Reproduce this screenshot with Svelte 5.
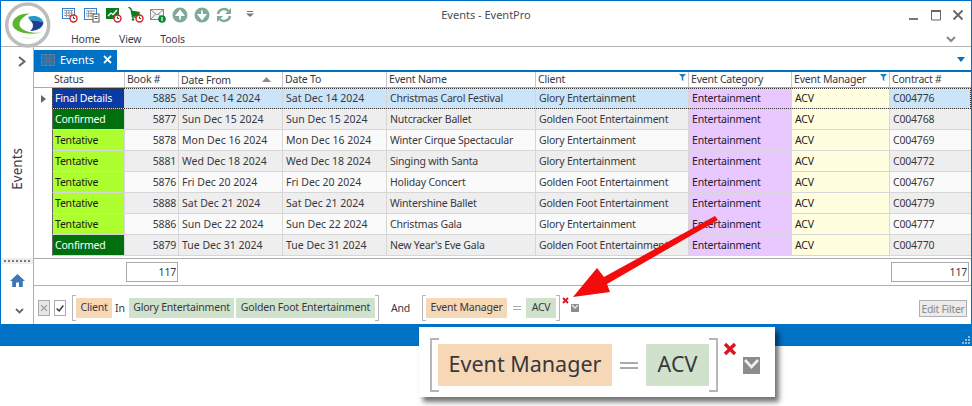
<script>
  const rows = [
    { s: 'Final Details', c: 'final', b: 5885, f: 'Sat Dec 14 2024', t: 'Sat Dec 14 2024', n: 'Christmas Carol Festival', cl: 'Glory Entertainment', k: 'C004776', z: 'sel' },
    { s: 'Confirmed', c: 'conf', b: 5877, f: 'Sun Dec 15 2024', t: 'Sun Dec 15 2024', n: 'Nutcracker Ballet', cl: 'Golden Foot Entertainment', k: 'C004768', z: 'even' },
    { s: 'Tentative', c: 'tent', b: 5878, f: 'Mon Dec 16 2024', t: 'Mon Dec 16 2024', n: 'Winter Cirque Spectacular', cl: 'Glory Entertainment', k: 'C004769', z: 'odd' },
    { s: 'Tentative', c: 'tent', b: 5881, f: 'Wed Dec 18 2024', t: 'Wed Dec 18 2024', n: 'Singing with Santa', cl: 'Glory Entertainment', k: 'C004772', z: 'even' },
    { s: 'Tentative', c: 'tent', b: 5876, f: 'Fri Dec 20 2024', t: 'Fri Dec 20 2024', n: 'Holiday Concert', cl: 'Golden Foot Entertainment', k: 'C004767', z: 'odd' },
    { s: 'Tentative', c: 'tent', b: 5888, f: 'Sat Dec 21 2024', t: 'Sat Dec 21 2024', n: 'Wintershine Ballet', cl: 'Golden Foot Entertainment', k: 'C004779', z: 'even' },
    { s: 'Tentative', c: 'tent', b: 5886, f: 'Sun Dec 22 2024', t: 'Sun Dec 22 2024', n: 'Christmas Gala', cl: 'Glory Entertainment', k: 'C004777', z: 'odd' },
    { s: 'Confirmed', c: 'conf', b: 5879, f: 'Tue Dec 31 2024', t: 'Tue Dec 31 2024', n: "New Year's Eve Gala", cl: 'Golden Foot Entertainment', k: 'C004770', z: 'even' }
  ];
</script>

<div class="page">
  <div class="window">
    <header class="ribbon">
      <svg class="logo" width="54" height="48" viewBox="0 0 54 48">
        <circle cx="26.700" cy="25" r="21" fill="#fff" stroke="#bdbdbd" stroke-width="3.500" />
        <g transform="translate(0,-2)">
          <path d="M29 15.500C19 15 11 20 11.500 26.500C12 33 24 38 42 34.500C30 36 18.500 32 18.500 26.500C18.500 21.500 24 17.500 29 15.500Z" fill="#5cb531" />
          <path d="M27 19C34 16.500 41 19 42.500 24.500C37 22.500 32 22 29 22.500Z" fill="#1f9bc9" />
          <path d="M29 33C37 33 42 29 42.500 24.500C37 22.500 32 22 29 22.500C33 25 33 30 29 33Z" fill="#1c3f94" />
          <path d="M19 38C25 42 32 41 36 39C30 40 24 40 19 38Z" fill="#d5e8c4" />
        </g>
      </svg>
      <div class="ribbon-main">
        <div class="quick">
          <div class="tools">
            <svg width="16" height="16" viewBox="0 0 16 16"><rect x=".5" y="1.500" width="12" height="10" fill="#fff" stroke="#2f80d8"/><path d="M2 3.500h9M2 6h9M2 8.500h9M4.500 3v7M7 3v7M9.500 3v7" stroke="#9a9a9a"/><circle cx="11.500" cy="11.500" r="3.500" fill="#fff" stroke="#d8212c" stroke-width="1.400"/><path d="M11.500 9.500v2h1.500" stroke="#444" fill="none"/></svg>
            <svg width="16" height="16" viewBox="0 0 16 16"><rect x=".5" y="1.500" width="12" height="11" fill="#fff" stroke="#2f80d8"/><path d="M2 4h9M2 6.500h9M2 9h9M4.500 3.500v7M7 3.500v7" stroke="#9a9a9a"/><rect x="9" y="7" width="6" height="8" fill="#fff" stroke="#555"/><path d="M10.500 9.500h3M10.500 11.500h3" stroke="#555"/></svg>
            <svg width="16" height="16" viewBox="0 0 16 16"><rect x="0" y="1" width="13" height="11" fill="#0b7d1f"/><path d="M2 9l3-3 2 1.500L11 3" stroke="#fff" stroke-width="1.300" fill="none"/><circle cx="11.500" cy="11.500" r="3.500" fill="#fff" stroke="#d8212c" stroke-width="1.400"/><path d="M11.500 9.500v2h1.500" stroke="#444" fill="none"/></svg>
            <svg width="16" height="16" viewBox="0 0 16 16"><path d="M.5 0l2.500 2 1.500 8h5" stroke="#0b7d1f" stroke-width="1.400" fill="none"/><path d="M3.500 3.500L12 5l-1 4H4.500z" fill="#0b7d1f"/><circle cx="5" cy="12.500" r="1.300" fill="#0b7d1f"/><circle cx="11.500" cy="11.500" r="3.500" fill="#fff" stroke="#d8212c" stroke-width="1.400"/><path d="M11.500 9.500v2h1.500" stroke="#444" fill="none"/></svg>
            <svg width="16" height="16" viewBox="0 0 16 16"><rect x=".5" y="2.500" width="13" height="10" fill="#f4f4f4" stroke="#8a8a8a"/><path d="M.5 2.500L7 8l6.500-5.500M.5 12.500L5.500 7M13.500 12.500L8.500 7" stroke="#8a8a8a" fill="none"/><circle cx="12" cy="12" r="3.800" fill="#0b8a2b"/><path d="M12 10v4" stroke="#fff" stroke-width="1.200"/></svg>
            <svg width="16" height="16" viewBox="0 0 16 16"><circle cx="8" cy="8" r="7.500" fill="#7eaa97"/><path d="M8 12.500V6M4.800 8L8 4l3.200 4z" stroke="#fff" stroke-width="1.800" fill="#fff"/></svg>
            <svg width="16" height="16" viewBox="0 0 16 16"><circle cx="8" cy="8" r="7.500" fill="#7eaa97"/><path d="M8 3.500V10M4.800 8L8 12l3.200-4z" stroke="#fff" stroke-width="1.800" fill="#fff"/></svg>
            <svg width="16" height="16" viewBox="0 0 16 16"><path d="M2 7a6 5.500 0 0 1 10.500-3M14 9a6 5.500 0 0 1-10.500 3" stroke="#7eaa97" stroke-width="2.400" fill="none"/><path d="M15 1v6h-6zM1 15V9h6z" fill="#7eaa97"/></svg>
            <svg class="more" width="8" height="6" viewBox="0 0 8 6"><path d="M1 .5h6" stroke="#777"/><path d="M0 2.500h8L4 6z" fill="#777"/></svg>
          </div>
          <div class="title">Events - EventPro</div>
          <div class="controls">
            <svg width="12" height="12" viewBox="0 0 12 12"><path d="M1 10h9" stroke="#777" stroke-width="2"/></svg>
            <svg width="12" height="12" viewBox="0 0 12 12"><path d="M1 2.500h10M1.500 2v9h9V2" stroke="#666" fill="none"/><path d="M1 2h10" stroke="#666" stroke-width="2"/></svg>
            <svg width="12" height="12" viewBox="0 0 12 12"><path d="M1.500 1.500l9 9M10.500 1.500l-9 9" stroke="#666" stroke-width="1.800"/></svg>
          </div>
        </div>
        <div class="menu">
          <nav><span>Home</span><span>View</span><span>Tools</span></nav>
          <svg width="10" height="7" viewBox="0 0 10 7"><path d="M1 1l4 4 4-4" stroke="#888" stroke-width="2" fill="none"/></svg>
        </div>
      </div>
    </header>

    <div class="body">
      <aside class="side">
        <svg class="side-open" width="9" height="11" viewBox="0 0 9 11"><path d="M1 1l5.500 4.500L1 10" stroke="#666" stroke-width="2" fill="none"/></svg>
        <div class="side-label"><span>Events</span></div>
        <div class="grip"><i></i><i></i><i></i><i></i><i></i><i></i><i></i></div>
        <svg class="home" width="15" height="13" viewBox="0 0 15 13"><path d="M7.500 0L15 7h-2.200v6H9V8.500H6V13H2.200V7H0z" fill="#3f76b4"/></svg>
        <svg class="side-down" width="9" height="6" viewBox="0 0 9 6"><path d="M1 1l3.500 3.500L8 1" stroke="#666" stroke-width="1.800" fill="none"/></svg>
      </aside>

      <main class="main">
        <div class="tabs">
          <div class="tab">
            <svg width="14" height="12" viewBox="0 0 14 12"><rect x=".5" y=".5" width="13" height="11" fill="#2a6fa8" stroke="#5c7f9e"/><path d="M1 4h12M1 8h12M5 1v10M9 1v10" stroke="#46789f"/><circle cx="7" cy="6" r="1" fill="#c0504d"/></svg>
            <span>Events</span>
            <svg width="9" height="9" viewBox="0 0 9 9"><path d="M1 1l7 7M8 1L1 8" stroke="#fff" stroke-width="1.800"/></svg>
          </div>
          <svg class="tab-menu" width="8" height="5" viewBox="0 0 8 5"><path d="M0 0h8L4 5z" fill="#0072c6"/></svg>
        </div>

        <div class="grid">
          <div class="row head">
            <div class="ind"></div>
            <div class="h">Status</div>
            <div class="h">Book #</div>
            <div class="h split">Date From<svg width="9" height="5" viewBox="0 0 9 5"><path d="M0 5h9L4.500 0z" fill="#8a8a8a"/></svg></div>
            <div class="h">Date To</div>
            <div class="h">Event Name</div>
            <div class="h split filt">Client<svg width="7" height="7" viewBox="0 0 7 7"><path d="M0 0h7L4.300 3v4L2.700 6V3z" fill="#1a7fc4"/></svg></div>
            <div class="h">Event Category</div>
            <div class="h split filt">Event Manager<svg width="7" height="7" viewBox="0 0 7 7"><path d="M0 0h7L4.300 3v4L2.700 6V3z" fill="#1a7fc4"/></svg></div>
            <div class="h">Contract #</div>
          </div>
          {#each rows as r, i}
            <div class="row data {r.z}">
              <div class="ind">{#if i === 0}<svg width="5" height="8" viewBox="0 0 5 8"><path d="M0 0l5 4-5 4z" fill="#666"/></svg>{/if}</div>
              <div class="c st {r.c}">{r.s}</div>
              <div class="c num">{r.b}</div>
              <div class="c date">{r.f}</div>
              <div class="c date">{r.t}</div>
              <div class="c">{r.n}</div>
              <div class="c">{r.cl}</div>
              <div class="c cat">Entertainment</div>
              <div class="c mgr">ACV</div>
              <div class="c">{r.k}</div>
            </div>
          {/each}
        </div>

        <div class="totals">
          <div class="row sum">
            <div class="ind"></div><div></div>
            <div class="total">117</div>
            <div></div><div></div><div></div><div></div><div></div><div></div>
            <div class="total wide">117</div>
          </div>
        </div>

        <div class="filter">
          <span class="box off"><svg width="12" height="12" viewBox="0 0 12 12"><path d="M2.500 2.500l7 7M9.500 2.500l-7 7" stroke="#999" stroke-width="1.500"/></svg></span>
          <span class="box"><svg width="12" height="12" viewBox="0 0 12 12"><path d="M2 6.500l3 3 5-6.500" stroke="#333" stroke-width="1.700" fill="none"/></svg></span>
          <div class="group g1">
            <span class="tok field">Client</span>
            <span class="word">In</span>
            <span class="tok val">Glory Entertainment</span>
            <span class="tok val">Golden Foot Entertainment</span>
          </div>
          <span class="and">And</span>
          <div class="group g2">
            <span class="tok field">Event Manager</span>
            <span class="eq"></span>
            <span class="tok val acv">ACV</span>
          </div>
          <div class="marks">
            <svg class="xm" width="7" height="7" viewBox="0 0 7 7"><path d="M1 1l5 5M6 1L1 6" stroke="#dc1420" stroke-width="1.800"/></svg>
            <svg class="ck" width="8" height="8" viewBox="0 0 8 8"><rect width="8" height="8" fill="#8c8c8c"/><path d="M1 1l3 3 3-3" stroke="#e8e8e8" stroke-width="1.400" fill="none"/></svg>
          </div>
          <button class="edit">Edit Filter</button>
        </div>
      </main>
    </div>

    <footer class="status">
      <svg class="resize" width="8" height="8" viewBox="0 0 8 8"><path d="M6 0h2v2H6zM6 3h2v2H6zM3 3h2v2H3zM6 6h2v2H6zM3 6h2v2H3zM0 6h2v2H0z" fill="#8db9dd"/></svg>
    </footer>
  </div>

  <svg class="arrow" width="160" height="90" viewBox="0 0 160 90">
    <path d="M146 5L143 1L32 62L25 53L1 82L38 77L35 69Z" fill="#f40b0b" />
  </svg>

  <div class="zoomed">
    <div class="group big">
      <span class="tok field">Event Manager</span>
      <span class="eq"></span>
      <span class="tok val">ACV</span>
    </div>
    <div class="big-marks">
      <svg class="bx" width="14" height="14" viewBox="0 0 14 14"><path d="M2 2l10 10M12 2L2 12" stroke="#dc1420" stroke-width="3.400"/></svg>
      <svg class="bc" width="17" height="17" viewBox="0 0 17 17"><rect width="17" height="17" fill="#8c8c8c"/><path d="M2 3l6.500 7L15 3" stroke="#efefef" stroke-width="2.600" fill="none"/></svg>
    </div>
  </div>
</div>

<style>
  :global(body) { margin: 0; background: #fff; }
  * { box-sizing: border-box; }
  .page {
    position: relative; width: 972px; height: 406px; overflow: hidden;
    font-family: "Noto Sans", sans-serif; font-size: 10.500px; letter-spacing: -.2px; color: #38383f; background: #fff;
  }
  .window {
    display: flex; flex-direction: column; height: 346px;
    border: 1px solid #0072c6; border-bottom: 0;
    background: #fff;
  }
  .ribbon { display: flex; height: 46px; flex: none; border-bottom: 1px solid #b4b4b4; }
  .logo { flex: none; margin-top: -1px; position: relative; z-index: 2; overflow: visible; }
  .ribbon-main { flex: 1; display: flex; flex-direction: column; min-width: 0; }
  .quick { display: grid; grid-template-columns: 1fr auto 1fr; height: 31px; }
  .tools { display: flex; gap: 6px; padding: 6px 0 0 7px; align-items: flex-start; }
  .more { margin: 4px 0 0 8px; }
  .title { font-size: 11px; letter-spacing: 0; color: #4c4c50; padding-top: 6px; margin-left: -54px; }
  .controls { display: flex; justify-content: flex-end; gap: 10px; padding: 8px 7px 0 0; }
  .menu { display: flex; justify-content: space-between; align-items: center; height: 14px; padding: 0 15px 0 16px; }
  .menu nav { display: flex; gap: 19px; color: #3c3c50; }

  .body { flex: 1; display: flex; min-height: 0; }
  .side { width: 33px; flex: none; display: flex; flex-direction: column; align-items: center; border-right: 1px solid #b0b0b0; }
  .side-open { margin: 9px 0 0 11px; flex: none; }
  .side-label { flex: 1; display: flex; align-items: center; justify-content: center; padding-top: 13px; }
  .side-label span { writing-mode: vertical-rl; transform: rotate(180deg); font-size: 13.500px; letter-spacing: 0; color: #3a3a4a; }
  .grip { width: 100%; height: 6px; background: #eee; display: flex; justify-content: center; align-items: center; gap: 2px; flex: none; }
  .grip i { width: 2px; height: 2px; background: #777; }
  .home { margin-top: 10px; flex: none; }
  .side-down { margin: 21px 0 10px 4px; flex: none; }

  .main { flex: 1; min-width: 0; display: flex; flex-direction: column; }
  .tabs { height: 25px; flex: none; display: flex; justify-content: space-between; align-items: flex-end; border-bottom: 2px solid #0072c6; }
  .tab { width: 83px; height: 20px; padding: 0 0 1px 7px; background: #0072c6; color: #fff; display: flex; align-items: center; gap: 5px; font-size: 11px; letter-spacing: 0; }
  .tab svg:last-child { margin-left: 4px; }
  .tab-menu { margin: 0 6px 8px 0; }

  .row {
    display: grid;
    grid-template-columns: 18px 73px 54px 104px 104px 149px 153px 103px 98px 1fr;
  }
  .grid { height: 187px; flex: none; border-bottom: 1px solid #aaa; }
  .head { height: 16px; border-bottom: 1px solid #aaa; line-height: 14px; }
  .h { padding-left: 2px; border-right: 1px solid #c8c8c8; white-space: nowrap; }
  .h:last-child { border-right: 0; }
  .split { display: flex; justify-content: space-between; align-items: center; padding-right: 11px; }
  .filt { padding-right: 2px; align-items: flex-start; }
  .filt svg { margin-top: 2px; }
  .data { height: 21px; line-height: 20px; }
  .c { padding-left: 3px; border-right: 1px solid #d6d6d6; border-bottom: 1px solid #d6d6d6; white-space: nowrap; overflow: hidden; }
  .c:last-child { border-right: 0; }
  .date { letter-spacing: 0; }
  .ind { display: flex; align-items: center; justify-content: center; }
  .even .c { background: #eeeeee; }
  .odd .c { background: #fafafa; }
  .sel .c { background: #cce4f7; }
  .sel { outline: 1px dotted #333; outline-offset: -1px; position: relative; margin-left: 18px; grid-template-columns: 73px 54px 104px 104px 149px 153px 103px 98px 1fr; }
  .sel .ind { position: absolute; left: -18px; top: 0; width: 18px; height: 21px; }
  .num { text-align: right; padding-right: 2px; }
  .data .st { border-left: 1px solid #666; padding-left: 2px; }
  .data .final { background: #0a3aa5; color: #fff; }
  .data .conf { background: #00700f; color: #fff; }
  .data .tent { background: #adff2f; color: #1a1a1a; }
  .data .cat { background: #e9c8ff; color: #25202a; }
  .data .mgr { background: #ffffdf; color: #25202a; }

  .totals { height: 27px; flex: none; border-bottom: 1px solid #b0b0b0; padding-top: 3px; }
  .total { height: 20px; width: 52px; border: 1px solid #aaa; text-align: right; padding-right: 1px; line-height: 19px; margin-left: 1px; }
  .total.wide { width: 78px; }

  .filter { flex: 1; min-height: 0; display: flex; align-items: center; padding: 6px 0 0 4px; }
  .box { width: 12px; height: 16px; border: 1px solid #aaa; display: flex; align-items: center; justify-content: center; margin-right: 4px; }
  .box.off { background: #e6e6e6; }
  .group {
    display: flex; align-items: center; gap: 2px; height: 26px; padding: 0 3px; flex: none;
    background:
      linear-gradient(#b4b4b4, #b4b4b4) left top / 3px 1px no-repeat,
      linear-gradient(#b4b4b4, #b4b4b4) left bottom / 3px 1px no-repeat,
      linear-gradient(#b4b4b4, #b4b4b4) right top / 3px 1px no-repeat,
      linear-gradient(#b4b4b4, #b4b4b4) right bottom / 3px 1px no-repeat;
    border-left: 1px solid #b4b4b4; border-right: 1px solid #b4b4b4;
  }
  .g1 { margin-left: 2px; width: 307px; }
  .g1 .word { margin: 0 2px 0 1px; }
  .tok { height: 20px; line-height: 19px; padding: 0 4.500px; border-radius: 1px; white-space: nowrap; }
  .field { background: #f6d7b6; }
  .val { background: #d0e1cc; }
  .and { margin: 0 12px; }
  .g2 { width: 138px; justify-content: space-between; }
  .acv { width: 30px; text-align: center; padding: 0; }
  .eq { width: 8px; height: 4px; border-top: 1px solid #aaa; border-bottom: 1px solid #aaa; flex: none; }
  .marks { display: flex; align-items: flex-start; height: 26px; margin-left: 2px; }
  .xm { margin-top: 2px; }
  .ck { margin: 9px 0 0 2px; }
  .edit {
    margin: 1px 4px 0 auto; width: 48px; height: 17px; padding: 0; border: 1px solid #b0b0b0; background: #ececec;
    font: inherit; letter-spacing: -.3px; white-space: nowrap; color: #8a8a8a;
  }

  .status { height: 22px; flex: none; background: #0072c6; margin: 0 -1px; position: relative; }
  .resize { position: absolute; right: 2px; bottom: 2px; }

  .arrow { position: absolute; left: 572px; top: 215px; }
  .zoomed {
    position: absolute; left: 419px; top: 327px; width: 356px; height: 70px; background: #fff;
    box-shadow: 4px 5px 5px rgba(0, 0, 0, .55); display: flex; padding: 11px 0 0 11px;
  }
  .big { height: 54px; width: 288px; gap: 8px; padding: 0 6px; justify-content: flex-start; background-size: 7px 2px; border-width: 2px; border-color: #b8b8b8; font-size: 21.500px; letter-spacing: 0; }
  .big .tok { height: 42px; line-height: 40px; text-align: center; }
  .big .tok.field { width: 174px; padding: 0; }
  .big .tok.val { width: 63px; padding: 0; }
  .big .eq { width: 18px; height: 7px; border-width: 2px; margin: 0; }
  .big-marks { display: flex; align-items: flex-start; margin-left: 5px; }
  .bx { margin-top: 4px; }
  .bc { margin: 19px 0 0 6px; }
</style>
